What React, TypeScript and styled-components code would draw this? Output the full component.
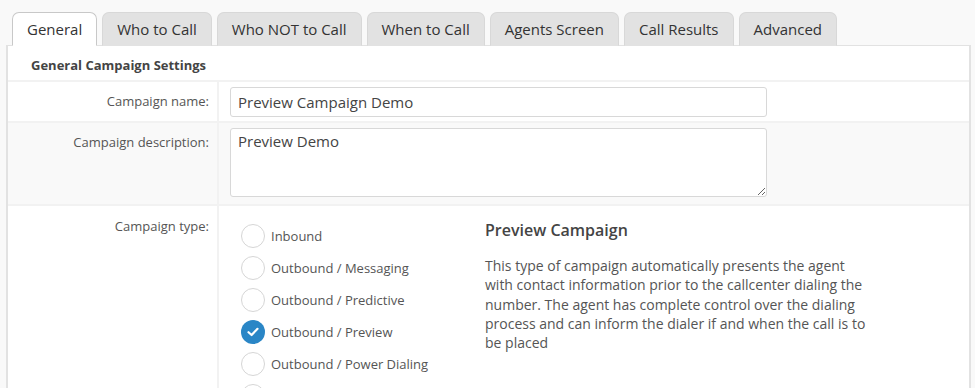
import styled, { createGlobalStyle } from "styled-components";

const GlobalStyle = createGlobalStyle`
  body {
    margin: 0;
    background: #f9f9f9;
    font-family: "Open Sans", "Liberation Sans", sans-serif;
    color: #555;
  }
`;

const tabs = [
  "General",
  "Who to Call",
  "Who NOT to Call",
  "When to Call",
  "Agents Screen",
  "Call Results",
  "Advanced",
];

const campaignTypes = [
  { label: "Inbound", checked: false },
  { label: "Outbound / Messaging", checked: false },
  { label: "Outbound / Predictive", checked: false },
  { label: "Outbound / Preview", checked: true },
  { label: "Outbound / Power Dialing", checked: false },
  { label: "Outbound / Progressive", checked: false },
];

const App = () => {
  return (
    <Page>
      <GlobalStyle />
      <TabBar>
        {tabs.map((t, i) => (
          <Tab key={t} $active={i === 0}>
            {t}
          </Tab>
        ))}
      </TabBar>
      <Panel>
        <SectionTitle>General Campaign Settings</SectionTitle>
        <Row>
          <Label>Campaign name:</Label>
          <Field>
            <TextInput defaultValue="Preview Campaign Demo" />
          </Field>
        </Row>
        <Row $striped>
          <Label>Campaign description:</Label>
          <Field $bottom={7}>
            <TextArea defaultValue="Preview Demo" />
          </Field>
        </Row>
        <Row>
          <Label $top={11}>Campaign type:</Label>
          <TypeField>
            <RadioList>
              {campaignTypes.map((c) => (
                <RadioItem key={c.label}>
                  <RadioCircle $checked={c.checked}>
                    {c.checked && (
                      <svg width="12" height="10" viewBox="0 0 12 10">
                        <path
                          d="M1.5 5.2 L4.6 8 L10.5 1.8"
                          fill="none"
                          stroke="#fff"
                          strokeWidth="2.2"
                          strokeLinecap="round"
                          strokeLinejoin="round"
                        />
                      </svg>
                    )}
                  </RadioCircle>
                  {c.label}
                </RadioItem>
              ))}
            </RadioList>
            <TypeInfo>
              <InfoTitle>Preview Campaign</InfoTitle>
              <InfoText>
                This type of campaign automatically presents the agent with
                contact information prior to the callcenter dialing the number.
                The agent has complete control over the dialing process and can
                inform the dialer if and when the call is to be placed
              </InfoText>
            </TypeInfo>
          </TypeField>
        </Row>
      </Panel>
    </Page>
  );
};

const Page = styled.div`
  padding: 12px 0 0 6px;
  width: 965px;
  height: 376px;
  overflow: hidden;
`;

const TabBar = styled.div`
  display: flex;
  gap: 5px;
  padding-left: 6px;
  position: relative;
  z-index: 1;
  margin-bottom: -1px;
`;

const Tab = styled.div<{ $active?: boolean }>`
  height: 34px;
  box-sizing: border-box;
  padding: 0 14px;
  display: flex;
  align-items: center;
  font-size: 15px;
  color: #333;
  border: 1px solid ${(p) => (p.$active ? "#c8c8c8" : "#d8d8d8")};
  border-bottom: ${(p) => (p.$active ? "1px solid #fff" : "1px solid #e2e2e2")};
  border-radius: 7px 7px 0 0;
  background: ${(p) => (p.$active ? "#fff" : "#e2e2e2")};
`;

const Panel = styled.div`
  background: #fff;
  border: 1px solid #e2e2e2;
  border-left-width: 2px;
  border-right-width: 2px;
  border-bottom: none;
  height: 400px;
`;

const SectionTitle = styled.div`
  height: 36px;
  box-sizing: border-box;
  padding: 3px 0 0 23px;
  display: flex;
  align-items: center;
  font-size: 13px;
  font-weight: 700;
  color: #444;
  border-bottom: 2px solid #f2f2f2;
`;

const Row = styled.div<{ $striped?: boolean }>`
  display: grid;
  grid-template-columns: 211px 1fr;
  background: ${(p) => (p.$striped ? "#f9f9f9" : "#fff")};
  border-bottom: 2px solid #f2f2f2;
`;

const Label = styled.div<{ $top?: number }>`
  text-align: right;
  padding: ${(p) => p.$top ?? 10}px 8px 0 0;
  font-size: 13px;
  color: #555;
  border-right: 2px solid #f2f2f2;
`;

const Field = styled.div<{ $bottom?: number }>`
  padding: 5px 0 ${(p) => p.$bottom ?? 4}px 11px;
  display: flex;
`;

const TextInput = styled.input`
  width: 537px;
  height: 30px;
  box-sizing: border-box;
  border: 1px solid #d8d8d8;
  border-radius: 3px;
  padding: 0 7px;
  font-family: "Open Sans", "Liberation Sans", sans-serif;
  font-size: 15px;
  color: #444;
  outline: none;
`;

const TextArea = styled.textarea`
  width: 537px;
  height: 69px;
  box-sizing: border-box;
  border: 1px solid #d8d8d8;
  border-radius: 3px;
  padding: 2px 7px;
  font-family: "Open Sans", "Liberation Sans", sans-serif;
  font-size: 15px;
  color: #444;
  outline: none;
  resize: vertical;
  display: block;
`;

const TypeField = styled.div`
  display: flex;
  padding: 18px 0 0 22px;
`;

const RadioList = styled.div`
  display: flex;
  flex-direction: column;
  gap: 8px;
  width: 244px;
`;

const RadioItem = styled.div`
  display: flex;
  align-items: center;
  gap: 6px;
  height: 24px;
  font-size: 13px;
  color: #555;
`;

const RadioCircle = styled.div<{ $checked?: boolean }>`
  width: 24px;
  height: 24px;
  box-sizing: border-box;
  border-radius: 50%;
  border: ${(p) => (p.$checked ? "none" : "1px solid #d6d6d6")};
  background: ${(p) => (p.$checked ? "#2a86c6" : "#fff")};
  display: flex;
  align-items: center;
  justify-content: center;
`;

const TypeInfo = styled.div`
  width: 385px;
`;

const InfoTitle = styled.div`
  font-size: 16px;
  font-weight: 600;
  color: #444;
  margin-top: -5px;
  line-height: 22px;
`;

const InfoText = styled.div`
  margin-top: 15px;
  font-size: 14px;
  line-height: 19.3px;
  color: #555;
`;

export default App;
